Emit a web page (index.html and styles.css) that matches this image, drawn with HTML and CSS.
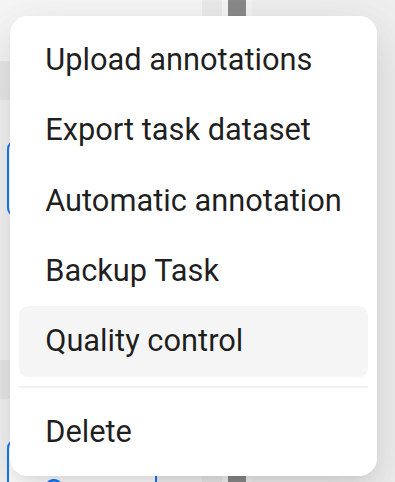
FILE: index.html
```html
<!DOCTYPE html>
<html lang="en">
<head>
<meta charset="utf-8">
<title>Task actions</title>
<link rel="stylesheet" href="styles.css">
</head>
<body>
<div class="page">
  <div class="left">
    <div class="row row-top"></div>
    <div class="band"></div>
    <div class="row row-mid">
      <div class="btn"></div>
    </div>
    <div class="band"></div>
    <div class="row row-bottom">
      <div class="btn btn-open">Open</div>
    </div>
  </div>
  <div class="col-a"></div>
  <div class="col-gap"></div>
  <div class="col-bar"></div>
  <div class="col-gap2"></div>
  <div class="right"></div>
</div>

<ul class="menu">
  <li class="item">Upload annotations</li>
  <li class="item">Export task dataset</li>
  <li class="item">Automatic annotation</li>
  <li class="item">Backup Task</li>
  <li class="item item-hover">Quality control</li>
  <li class="divider"></li>
  <li class="item">Delete</li>
</ul>
</body>
</html>
```
FILE: styles.css
```css
html, body {
  margin: 0;
  padding: 0;
}
body {
  width: 395px;
  height: 482px;
  overflow: hidden;
  position: relative;
  font-family: Roboto, "Liberation Sans", sans-serif;
  background: #efefef;
}
.page {
  display: flex;
  height: 482px;
}
.left {
  width: 202px;
  display: flex;
  flex-direction: column;
  background: #f3f3f3;
}
.row-top {
  height: 61px;
  background: #f6f6f6;
}
.band {
  height: 39px;
  background: #e9e9e9;
}
.row-mid {
  height: 260px;
  padding: 40px 0 0 7px;
  box-sizing: border-box;
}
.row-bottom {
  flex: 1;
  padding: 40px 0 0 7px;
  box-sizing: border-box;
  overflow: hidden;
}
.btn {
  width: 150px;
  height: 77px;
  box-sizing: border-box;
  border: 2px solid #1677ff;
  border-radius: 9px;
  background: #ffffff;
}
.btn-open {
  color: #1677ff;
  font-size: 31px;
  line-height: 1;
  padding: 34px 0 0 34px;
}
.col-a {
  width: 20px;
  background: #ebebeb;
}
.col-gap {
  width: 6px;
  background: #f5f5f5;
}
.col-bar {
  width: 18px;
  background: #8a8a8a;
}
.col-gap2 {
  width: 6px;
  background: #f3f3f3;
}
.right {
  flex: 1;
  background: #efefef;
}
.menu {
  position: absolute;
  left: 10px;
  top: 16px;
  width: 367px;
  box-sizing: border-box;
  margin: 0;
  padding: 8.8px;
  list-style: none;
  background: #ffffff;
  border-radius: 17.6px;
  box-shadow: 0 13px 35px 0 rgba(0, 0, 0, 0.08),
              0 6.6px 13px -9px rgba(0, 0, 0, 0.12),
              0 20px 62px 18px rgba(0, 0, 0, 0.05);
}
.item {
  height: 70.4px;
  box-sizing: border-box;
  padding: 11px 26.4px;
  font-size: 30.8px;
  line-height: 48.4px;
  color: rgba(0, 0, 0, 0.88);
  border-radius: 8.8px;
  white-space: nowrap;
}
.item-hover {
  background: rgba(0, 0, 0, 0.04);
}
.divider {
  height: 2.2px;
  margin: 8.8px 0;
  background: rgba(5, 5, 5, 0.06);
}
```
